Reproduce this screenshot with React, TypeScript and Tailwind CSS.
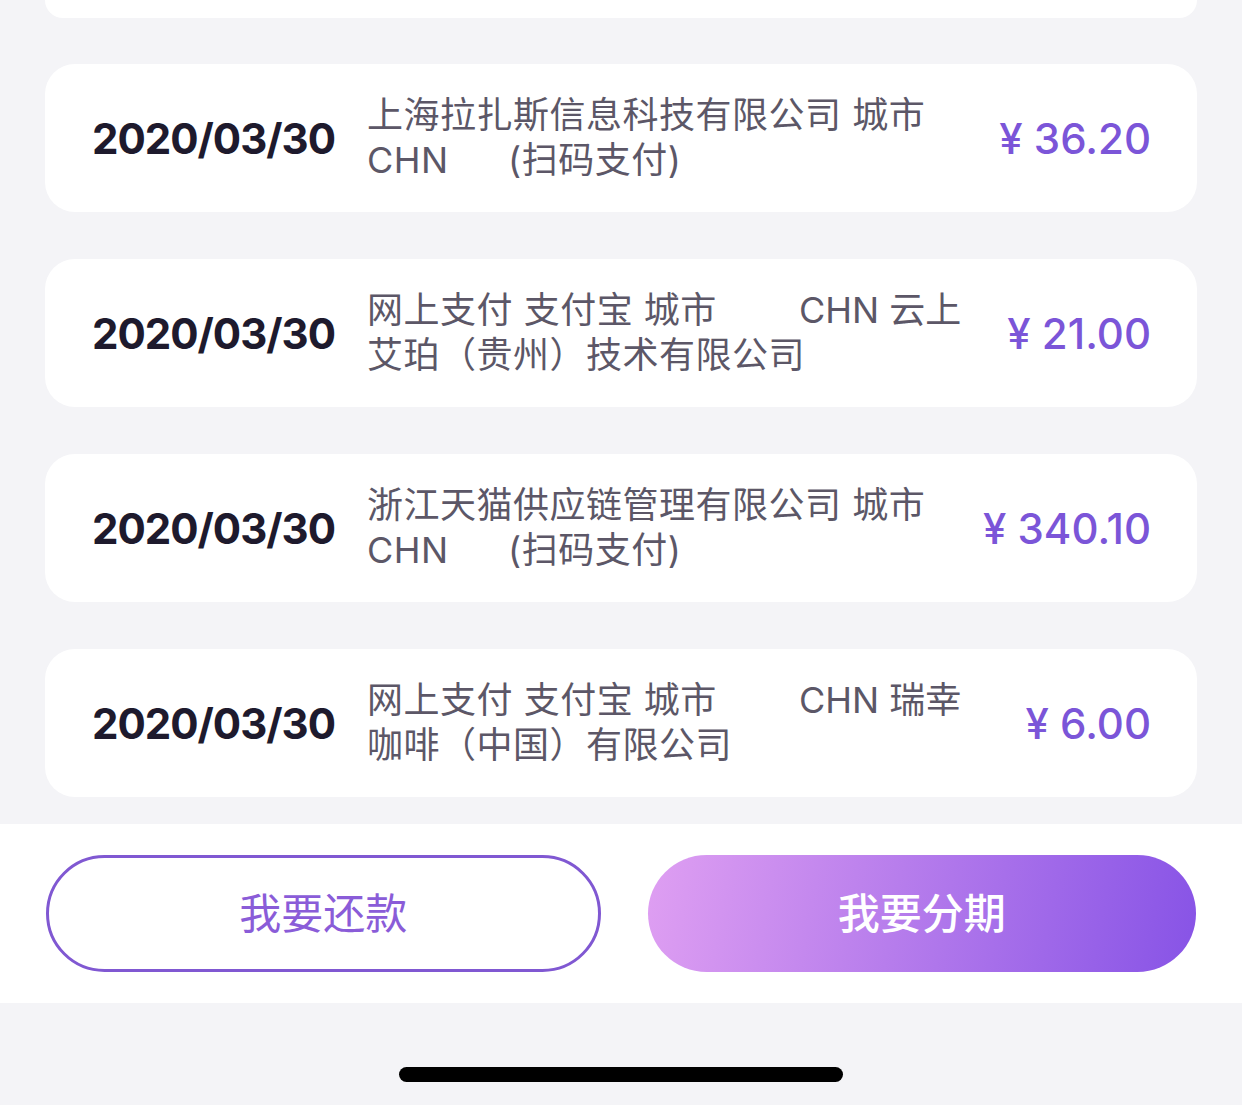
import React from "react";

type Bill = {
  date: string;
  line1: string;
  line1Tail?: string;
  line2: string;
  line2Tail?: string;
  amount: string;
};

const bills: Bill[] = [
  {
    date: "2020/03/30",
    line1: "上海拉扎斯信息科技有限公司 城市",
    line2: "CHN",
    line2Tail: "(扫码支付)",
    amount: "¥ 36.20",
  },
  {
    date: "2020/03/30",
    line1: "网上支付 支付宝 城市",
    line1Tail: "CHN 云上",
    line2: "艾珀（贵州）技术有限公司",
    amount: "¥ 21.00",
  },
  {
    date: "2020/03/30",
    line1: "浙江天猫供应链管理有限公司 城市",
    line2: "CHN",
    line2Tail: "(扫码支付)",
    amount: "¥ 340.10",
  },
  {
    date: "2020/03/30",
    line1: "网上支付 支付宝 城市",
    line1Tail: "CHN 瑞幸",
    line2: "咖啡（中国）有限公司",
    amount: "¥ 6.00",
  },
];

const font = {
  fontFamily: '"Inter", "Noto Sans CJK SC", sans-serif',
};

function BillCard({ bill }: { bill: Bill }) {
  return (
    <div className="flex h-[148px] items-center rounded-[30px] bg-white pl-[47px] pr-[46px]">
      <div className="w-[242px] shrink-0 whitespace-nowrap text-[42px] font-bold tracking-[-1px] text-[#1e1a2d]">
        {bill.date}
      </div>
      <div className="ml-[33px] flex-1 whitespace-nowrap text-[36px] leading-[45px] tracking-[0.5px] text-[#5c5767]">
        <div className="flex">
          <span className={bill.line1Tail ? "w-[432px]" : ""}>{bill.line1}</span>
          {bill.line1Tail && <span className="tracking-[0px]">{bill.line1Tail}</span>}
        </div>
        <div className="flex">
          <span className={bill.line2Tail ? "w-[141px]" : ""}>{bill.line2}</span>
          {bill.line2Tail && <span>{bill.line2Tail}</span>}
        </div>
      </div>
      <div className="shrink-0 text-right text-[42px] font-medium text-[#7b55d8]">
        {bill.amount}
      </div>
    </div>
  );
}

export default function App() {
  return (
    <div className="flex min-h-[1105px] w-full flex-col bg-[#f4f4f7]" style={font}>
      <div className="flex flex-col gap-[46px] px-[45px]">
        <div className="h-[18px] rounded-b-[30px] bg-white" />
        <div className="flex flex-col gap-[47px]">
          {bills.map((b, i) => (
            <BillCard key={i} bill={b} />
          ))}
        </div>
      </div>

      <div className="mt-[27px] flex gap-[47px] bg-white px-[46px] py-[31px]">
        <button
          type="button"
          className="flex h-[117px] flex-1 items-center justify-center rounded-full border-[3px] border-[#8058d2] bg-white text-[42px] text-[#8a5cd8]"
        >
          我要还款
        </button>
        <button
          type="button"
          className="flex h-[117px] flex-1 items-center justify-center rounded-full bg-[linear-gradient(100deg,#df9ff2_0%,#b77dec_45%,#8753e6_100%)] text-[42px] font-medium text-white"
        >
          我要分期
        </button>
      </div>

      <div className="flex flex-1 items-start justify-center pt-[64px]">
        <div className="h-[15px] w-[444px] rounded-full bg-black" />
      </div>
    </div>
  );
}
